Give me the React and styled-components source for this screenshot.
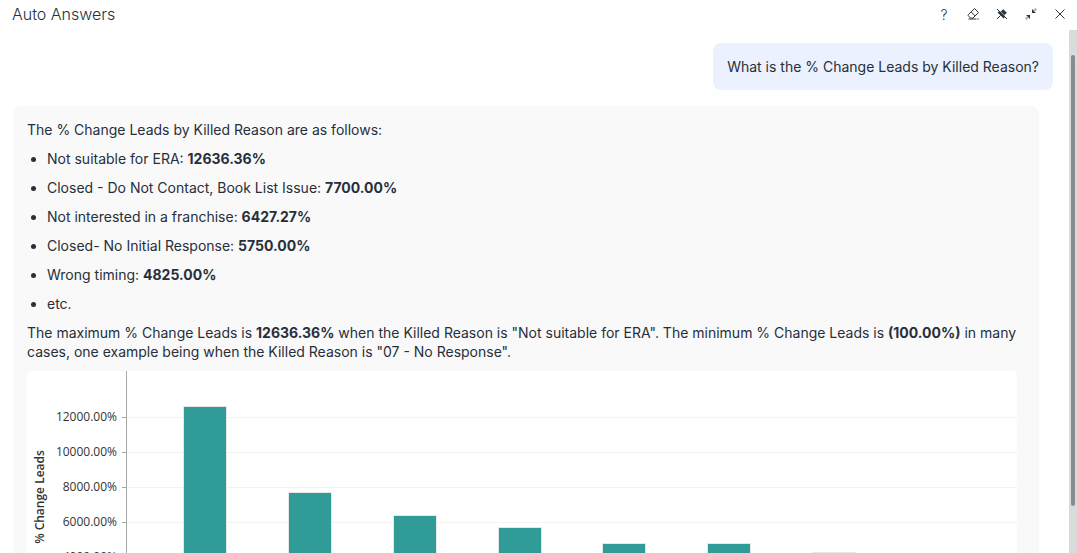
import styled, { createGlobalStyle } from 'styled-components';

const GlobalStyle = createGlobalStyle`
  * {
    box-sizing: border-box;
  }

  body {
    margin: 0;
    background: #fff;
    color: #272f3b;
    font-family: Inter, 'Liberation Sans', sans-serif;
    font-size: 14px;
    line-height: 19px;
  }
`;

const Panel = styled.div`
  display: flex;
  flex-direction: column;
  height: 100vh;
  overflow: hidden;
`;

const Header = styled.header`
  display: flex;
  align-items: flex-start;
  justify-content: space-between;
  flex: none;
  height: 30px;
  padding: 0 8px 0 12px;
`;

const Title = styled.h1`
  margin: 0;
  font-size: 16px;
  font-weight: 300;
  line-height: 28px;
`;

const Actions = styled.div`
  display: flex;
  gap: 11px;
`;

const IconButton = styled.button`
  display: flex;
  align-items: center;
  justify-content: center;
  width: 18px;
  height: 28px;
  padding: 0;
  border: 0;
  background: none;
  color: #2b333e;
  font: inherit;
  font-weight: 300;
  cursor: pointer;
`;

const Body = styled.div`
  display: flex;
  flex: 1;
  min-height: 0;
`;

const Conversation = styled.main`
  display: flex;
  flex: 1;
  flex-direction: column;
  gap: 16px;
  min-width: 0;
  padding: 13px 16px 0 13px;
  overflow: hidden;
`;

const Question = styled.div`
  align-self: flex-end;
  flex: none;
  padding: 14px;
  border-radius: 8px;
  background: #ebf1fe;
`;

const Answer = styled.section`
  flex: none;
  margin-right: 14px;
  padding: 14px;
  border-radius: 8px;
  background: #f9f9f9;
`;

const Text = styled.p`
  margin: 0 0 10px;
`;

const List = styled.ul`
  margin: 0 0 10px;
  padding-left: 20px;
`;

const Item = styled.li`
  margin-bottom: 10px;
`;

const ChartCard = styled.div`
  margin-right: 8px;
  border-radius: 4px;
  background: #fff;
  overflow: hidden;
`;

const ChartSvg = styled.svg`
  display: block;
  width: 100%;
  height: 300px;
  font-family: 'Open Sans', 'Noto Sans', sans-serif;
  font-size: 12px;
`;

const Scrollbar = styled.div`
  display: flex;
  flex-direction: column;
  flex: none;
  width: 8px;
  padding: 25px 2px 47px;
  background: #dbdbdb;
`;

const Thumb = styled.div`
  flex: 1;
  border-radius: 2px;
  background: #888c91;
`;

const reasons = [
  { label: 'Not suitable for ERA:', value: '12636.36%' },
  { label: 'Closed - Do Not Contact, Book List Issue:', value: '7700.00%' },
  { label: 'Not interested in a franchise:', value: '6427.27%' },
  { label: 'Closed- No Initial Response:', value: '5750.00%' },
  { label: 'Wrong timing:', value: '4825.00%' },
  { label: 'etc.' },
];

const ticks = [12000, 10000, 8000, 6000, 4000, 2000, 0];
const bars = [12636, 7700, 6427, 5700, 4825, 4825, 4300];

const AXIS_X = 99;
const ZERO_Y = 256;
const yOf = (value) => Math.round(ZERO_Y - (value / 2000) * 35);

const Chart = () => (
  <ChartSvg role="img" aria-label="% Change Leads by Killed Reason">
    {ticks.map((tick) => (
      <g key={tick} shapeRendering="crispEdges">
        <rect x={AXIS_X + 1} y={yOf(tick)} width="100%" height="1" fill="#f3f3f3" />
        <rect x={AXIS_X - 4} y={yOf(tick)} width="4" height="1" fill="#a8a8a8" />
        <text x="90" y={yOf(tick) + 4} textAnchor="end" fill="#333">
          {tick.toFixed(2)}%
        </text>
      </g>
    ))}
    {bars.map((value, i) => (
      <rect
        key={i}
        x={Math.round(156.2 + i * 104.8) + 0.5}
        y={yOf(value) + 0.5}
        width="43"
        height={ZERO_Y - yOf(value)}
        fill="#319b98"
        stroke="#e6e8e8"
      />
    ))}
    <rect x={AXIS_X} y="0" width="1" height={ZERO_Y} fill="#a8a8a8" />
    <text transform="translate(17 126) rotate(-90)" textAnchor="middle" fontWeight="600" fill="#333">
      % Change Leads
    </text>
  </ChartSvg>
);

const EraserIcon = () => (
  <svg width="14" height="14" viewBox="0 0 14 14" fill="none" stroke="currentColor" strokeLinejoin="round">
    <path d="M8.6 1.6 L12.5 5.5 L6.9 11.1 H4.6 L2.3 8.7 Q1.8 8 2.4 7.5 Z" />
    <path d="M5.2 5 L9 8.8 M2.5 12 H10.5 M11.5 12 H12.8" />
  </svg>
);

const UnpinIcon = () => (
  <svg width="12" height="12" viewBox="0 0 12 12" fill="currentColor">
    <path d="M7 1 L11 5 L10 5.4 L8.7 6.9 L8.6 9.4 L7.6 10.4 L1.6 4.4 L2.6 3.4 L5.1 3.3 L6.6 2 Z" />
    <path d="M1 1 L11 11 M4.6 7.4 L1 11" fill="none" stroke="currentColor" />
    <path d="M2 0.8 L11.2 10" fill="none" stroke="#fff" strokeWidth="0.6" />
  </svg>
);

const CollapseIcon = () => (
  <svg width="12" height="12" viewBox="0 0 12 12" fill="currentColor">
    <path d="M7 1 V5 H11 L9.9 3.9 L8.1 2.1 Z" />
    <path d="M1 7 H5 V11 L3.9 9.9 L2.1 8.1 Z" />
    <path d="M9 3 L11.3 0.7 M3 9 L0.7 11.3" fill="none" stroke="#a9adb2" strokeWidth="2" />
  </svg>
);

const CloseIcon = () => (
  <svg width="12" height="12" viewBox="0 0 12 12" fill="none" stroke="currentColor">
    <path d="M1.5 1.5 L10.5 10.5 M10.5 1.5 L1.5 10.5" />
  </svg>
);

const App = () => {
  return (
    <Panel>
      <GlobalStyle />
      <Header>
        <Title>Auto Answers</Title>
        <Actions>
          <IconButton aria-label="Help">?</IconButton>
          <IconButton aria-label="Clear"><EraserIcon /></IconButton>
          <IconButton aria-label="Unpin"><UnpinIcon /></IconButton>
          <IconButton aria-label="Collapse"><CollapseIcon /></IconButton>
          <IconButton aria-label="Close"><CloseIcon /></IconButton>
        </Actions>
      </Header>
      <Body>
        <Conversation>
          <Question>What is the % Change Leads by Killed Reason?</Question>
          <Answer>
            <Text>The % Change Leads by Killed Reason are as follows:</Text>
            <List>
              {reasons.map(({ label, value }) => (
                <Item key={label}>
                  {label} {value && <strong>{value}</strong>}
                </Item>
              ))}
            </List>
            <Text>
              The maximum % Change Leads is <strong>12636.36%</strong> when the Killed Reason is
              "Not suitable for ERA". The minimum % Change Leads is <strong>(100.00%)</strong> in
              many cases, one example being when the Killed Reason is "07 - No Response".
            </Text>
            <ChartCard>
              <Chart />
            </ChartCard>
          </Answer>
        </Conversation>
        <Scrollbar>
          <Thumb />
        </Scrollbar>
      </Body>
    </Panel>
  );
};

export default App;
